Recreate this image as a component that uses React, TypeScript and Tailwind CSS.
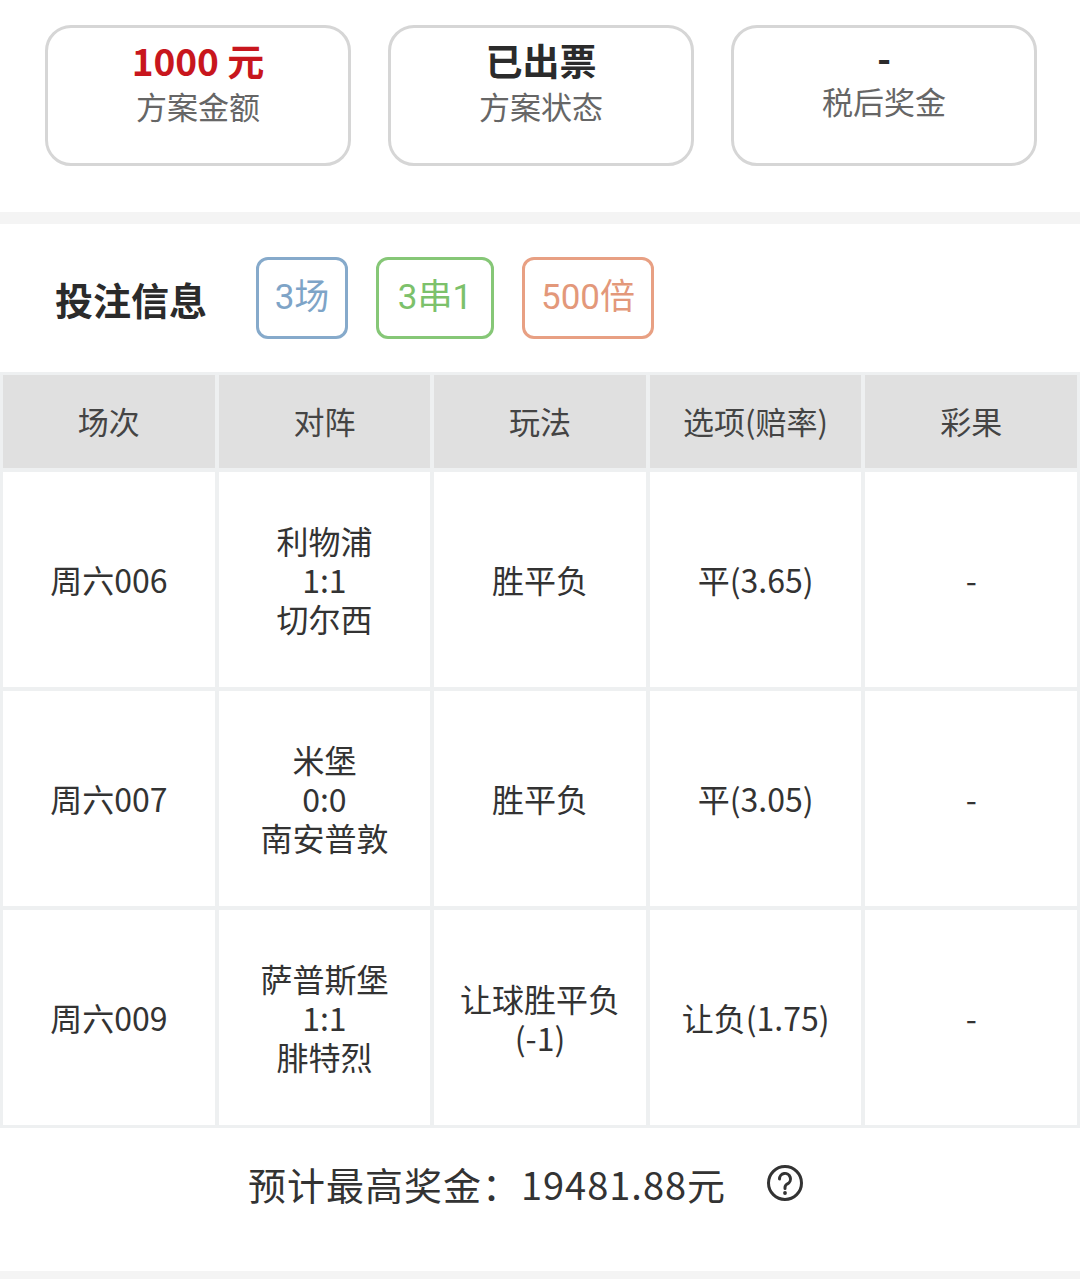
import React from 'react'

const font = { fontFamily: '"Noto Sans CJK SC", "Noto Sans", sans-serif' }

const summary = [
  { value: '1000 元', label: '方案金额', valueClass: 'text-[#c8161d] leading-[48px]' },
  { value: '已出票', label: '方案状态', valueClass: 'text-[#2b2b2b] leading-[48px]' },
  { value: '-', label: '税后奖金', valueClass: 'text-[#2b2b2b] leading-[43px]' },
]

const badges = [
  { text: '3场', cls: 'w-[92px] border-[#86aacb] text-[#7ea4c7]' },
  { text: '3串1', cls: 'w-[118px] border-[#86c777] text-[#7cc16b]' },
  { text: '500倍', cls: 'w-[132px] border-[#e8a083] text-[#e3987a]' },
]

const headers = ['场次', '对阵', '玩法', '选项(赔率)', '彩果']

const rows = [
  { no: '周六006', match: ['利物浦', '1:1', '切尔西'], play: ['胜平负'], pick: '平(3.65)', result: '-' },
  { no: '周六007', match: ['米堡', '0:0', '南安普敦'], play: ['胜平负'], pick: '平(3.05)', result: '-' },
  { no: '周六009', match: ['萨普斯堡', '1:1', '腓特烈'], play: ['让球胜平负', '(-1)'], pick: '让负(1.75)', result: '-' },
]

function Cell({ children }: { children: React.ReactNode }) {
  return (
    <div className="bg-white h-[215px] flex flex-col items-center justify-center text-center text-[32px] leading-[39px] text-[#333]">
      {children}
    </div>
  )
}

export default function App() {
  return (
    <div className="w-[1080px] h-[1279px] bg-white overflow-hidden" style={font}>
      {/* summary cards */}
      <div className="flex gap-[37px] pl-[45px] pt-[25px] pb-[46px]">
        {summary.map((s) => (
          <div
            key={s.label}
            className="w-[306px] h-[141px] border-[3px] border-[#d6d6d6] rounded-[26px] flex flex-col items-center pt-[8px]"
          >
            <div className={`text-[37px] font-bold ${s.valueClass}`}>{s.value}</div>
            <div className="text-[31px] leading-[44px] text-[#666]">{s.label}</div>
          </div>
        ))}
      </div>

      <div className="h-[12px] bg-[#f4f4f4]" />

      {/* bet info */}
      <div className="flex items-center h-[148px] pl-[55px]">
        <div className="text-[38px] font-bold text-[#2b2b2b] mr-[49px]">投注信息</div>
        <div className="flex gap-[28px]">
          {badges.map((b) => (
            <div
              key={b.text}
              className={`h-[82px] border-[3px] rounded-[12px] flex items-center justify-center text-[35px] ${b.cls}`}
              style={{ fontFamily: 'Roboto, "Noto Sans CJK SC", sans-serif' }}
            >
              {b.text}
            </div>
          ))}
        </div>
      </div>

      {/* table */}
      <div className="grid grid-cols-5 gap-[4px] px-[3px] py-[3px] bg-[#eef0f1]">
        {headers.map((h) => (
          <div key={h} className="bg-[#e0e0e0] h-[93px] flex items-center justify-center text-[31px] text-[#444]">
            {h}
          </div>
        ))}
        {rows.map((r) => (
          <React.Fragment key={r.no}>
            <Cell>{r.no}</Cell>
            <Cell>
              {r.match.map((m) => (
                <div key={m}>{m}</div>
              ))}
            </Cell>
            <Cell>
              {r.play.map((p) => (
                <div key={p}>{p}</div>
              ))}
            </Cell>
            <Cell>{r.pick}</Cell>
            <Cell>{r.result}</Cell>
          </React.Fragment>
        ))}
      </div>

      {/* footer */}
      <div className="h-[143px] flex items-center justify-center text-[38px] text-[#333] pb-[33px] pr-[28px]">
        <span className="tracking-[1px]">预计最高奖金：19481.88元</span>
        <svg className="ml-[40px]" width="38" height="38" viewBox="0 0 38 38" fill="none">
          <circle cx="19" cy="19" r="16.5" stroke="#333" strokeWidth="3" />
          <path d="M13.5 15a5.5 5.5 0 1 1 8 4.8c-1.6.9-2.5 1.9-2.5 3.6v1.2" stroke="#333" strokeWidth="3" strokeLinecap="round" fill="none" />
          <circle cx="19" cy="29" r="1.9" fill="#333" />
        </svg>
      </div>
      <div className="h-[20px] bg-[#f4f4f4]" />
    </div>
  )
}
